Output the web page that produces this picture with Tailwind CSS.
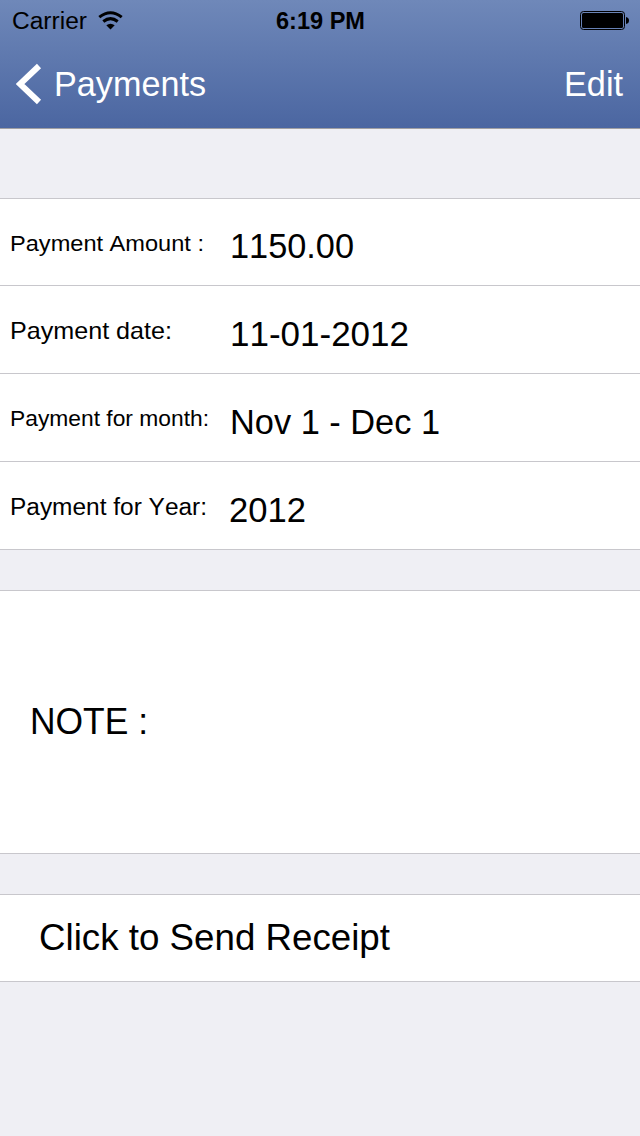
<!DOCTYPE html>
<html lang="en"><head><meta charset="utf-8"><title>Payments</title>
<script src="https://cdn.jsdelivr.net/npm/@tailwindcss/browser@4"></script></head>
<body class="w-[640px] h-[1136px] overflow-hidden bg-[#efeff4] text-black font-['Liberation_Sans',sans-serif] [font-kerning:none]">
<header class="h-[129px] border-b border-[#a09fa3] bg-linear-to-b from-[#6f88b9] to-[#4b66a1] text-white">
<div class="h-10 grid grid-cols-3 items-center text-black">
<div class="flex items-center pl-3 pt-[2px]"><svg class="overflow-visible" width="76" height="28"><text x="0" y="22" textLength="75" lengthAdjust="spacingAndGlyphs" font-size="23.500">Carrier</text></svg>
<svg class="ml-[9px]" width="27" height="20" viewBox="0 0 27 20"><path d="M2.300 6.200Q13.500-2.800 24.700 6.200M6.300 10.500Q13.500 4.700 20.700 10.500" fill="none" stroke="#000" stroke-width="3"/><path d="M9.300 14.300Q13.500 11 17.700 14.300L13.500 18.500Z"/></svg></div>
<div class="flex justify-center pt-[2px]"><svg class="overflow-visible" width="89" height="28"><text x="1" y="22" textLength="89" lengthAdjust="spacingAndGlyphs" font-size="23.500" font-weight="700">6:19 PM</text></svg></div>
<div class="flex justify-end pt-[2px] pr-[10px]"><svg width="50" height="20" viewBox="0 0 50 20"><rect x=".5" y=".5" width="44" height="18" rx="3" fill="none" stroke="#000"/><rect x="2" y="2" width="41" height="15" rx="1.500"/><path d="M46 6q3 .5 3 3.500t-3 3.500z"/></svg></div>
</div>
<div class="h-[88px] flex items-center pl-4 pr-[18px]">
<svg width="26" height="42" viewBox="0 0 26 42"><path d="M23 3L4 21L23 39" fill="none" stroke="#fff" stroke-width="6"/></svg>
<svg class="ml-3 overflow-visible" width="152" height="44"><text x="0" y="34" textLength="152" lengthAdjust="spacingAndGlyphs" font-size="35" fill="#fff">Payments</text></svg>
<svg class="ml-auto overflow-visible" width="58" height="44"><text x="0" y="34" textLength="59" lengthAdjust="spacingAndGlyphs" font-size="35" fill="#fff">Edit</text></svg>
</div></header>
<main>
<section class="mt-[69px] bg-white border-t border-[#c8c7cc]">
<div class="h-[87px] border-b border-[#c8c7cc] flex">
<svg class="ml-[9px] w-[220px] h-[86px]"><text x="1" y="52" textLength="194" lengthAdjust="spacingAndGlyphs" font-size="22.500">Payment Amount :</text></svg>
<svg class="w-[300px] h-[86px]"><text x="1" y="59" textLength="124" lengthAdjust="spacingAndGlyphs" font-size="35">1150.00</text></svg></div>
<div class="h-[88px] border-b border-[#c8c7cc] flex">
<svg class="ml-[9px] w-[220px] h-[87px]"><text x="1" y="53" textLength="162" lengthAdjust="spacingAndGlyphs" font-size="24">Payment date:</text></svg>
<svg class="w-[300px] h-[87px]"><text x="1" y="60" textLength="179" lengthAdjust="spacingAndGlyphs" font-size="35">11-01-2012</text></svg></div>
<div class="h-[88px] border-b border-[#c8c7cc] flex">
<svg class="ml-[9px] w-[220px] h-[87px]"><text x="1" y="52" textLength="199" lengthAdjust="spacingAndGlyphs" font-size="21.500">Payment for month:</text></svg>
<svg class="w-[300px] h-[87px]"><text x="1" y="60" textLength="210" lengthAdjust="spacingAndGlyphs" font-size="35">Nov 1 - Dec 1</text></svg></div>
<div class="h-[88px] border-b border-[#c8c7cc] flex">
<svg class="ml-[9px] w-[220px] h-[87px]"><text x="1" y="53" textLength="197" lengthAdjust="spacingAndGlyphs" font-size="23.500">Payment for Year:</text></svg>
<svg class="w-[300px] h-[87px]"><text x="0" y="60" textLength="77" lengthAdjust="spacingAndGlyphs" font-size="35">2012</text></svg></div>
</section>
<section class="mt-10 h-[264px] bg-white border-y border-[#c8c7cc] pl-[29px]">
<svg class="w-[300px] h-[260px]"><text x="1" y="143" textLength="118" lengthAdjust="spacingAndGlyphs" font-size="37">NOTE :</text></svg>
</section>
<section class="mt-10 h-[88px] bg-white border-y border-[#c8c7cc] pl-[39px]">
<svg class="w-[400px] h-[86px]"><text x="0" y="55" textLength="351" lengthAdjust="spacingAndGlyphs" font-size="36">Click to Send Receipt</text></svg>
</section>
</main>
</body></html>
